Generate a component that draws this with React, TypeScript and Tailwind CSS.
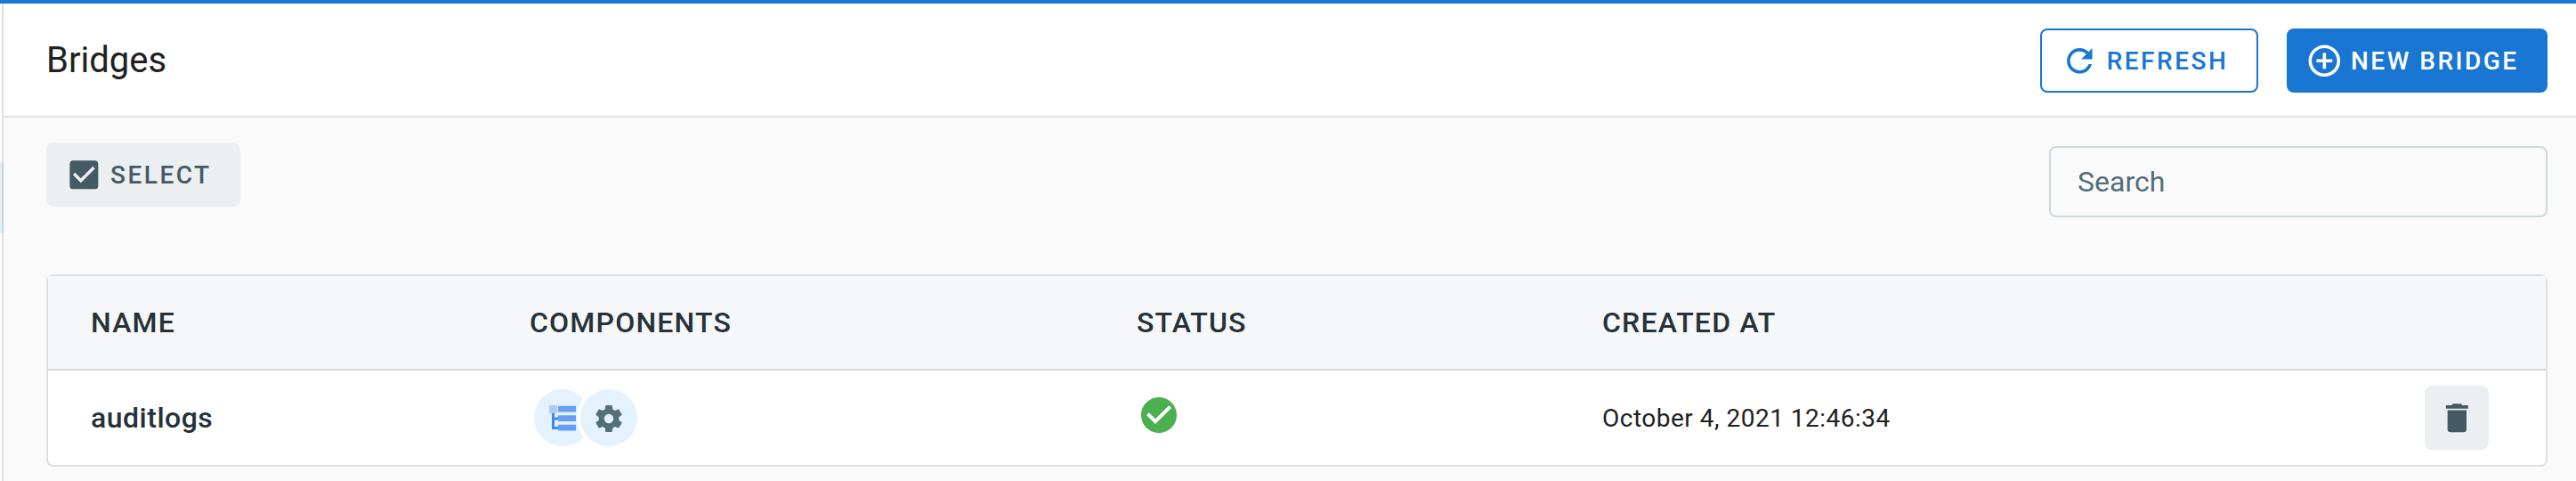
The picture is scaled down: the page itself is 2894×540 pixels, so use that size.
import React from "react";

function Mdi({ d, className }: { d: string; className: string }) {
  return (
    <svg viewBox="0 0 24 24" className={className} fill="currentColor" aria-hidden="true">
      <path d={d} />
    </svg>
  );
}

const icons = {
  refresh:
    "M17.65,6.35C16.2,4.9 14.21,4 12,4A8,8 0 0,0 4,12A8,8 0 0,0 12,20C15.73,20 18.84,17.45 19.73,14H17.65C16.83,16.33 14.61,18 12,18A6,6 0 0,1 6,12A6,6 0 0,1 12,6C13.66,6 15.14,6.69 16.22,7.78L13,11H20V4L17.65,6.35Z",
  plusCircle:
    "M12,20C7.59,20 4,16.41 4,12C4,7.59 7.59,4 12,4C16.41,4 20,7.59 20,12C20,16.41 16.41,20 12,20M12,2A10,10 0 0,0 2,12A10,10 0 0,0 12,22A10,10 0 0,0 22,12A10,10 0 0,0 12,2M13,7H11V11H7V13H11V17H13V13H17V11H13V7Z",
  checkbox:
    "M10,17L5,12L6.41,10.58L10,14.17L17.59,6.58L19,8M19,3H5C3.89,3 3,3.89 3,5V19A2,2 0 0,0 5,21H19A2,2 0 0,0 21,19V5C21,3.89 20.1,3 19,3Z",
  checkCircle:
    "M12 2C6.5 2 2 6.5 2 12S6.5 22 12 22 22 17.5 22 12 17.5 2 12 2M10 17L5 12L6.41 10.59L10 14.17L17.59 6.58L19 8L10 17Z",
  trash:
    "M19,4H15.5L14.5,3H9.5L8.5,4H5V6H19M6,19A2,2 0 0,0 8,21H16A2,2 0 0,0 18,19V7H6V19Z",
  cog: "M12,15.5A3.5,3.5 0 0,1 8.5,12A3.5,3.5 0 0,1 12,8.5A3.5,3.5 0 0,1 15.5,12A3.5,3.5 0 0,1 12,15.5M19.43,12.97C19.47,12.65 19.5,12.33 19.5,12C19.5,11.67 19.47,11.34 19.43,11L21.54,9.37C21.73,9.22 21.78,8.95 21.66,8.73L19.66,5.27C19.54,5.05 19.27,4.96 19.05,5.05L16.56,6.05C16.04,5.66 15.5,5.32 14.87,5.07L14.5,2.42C14.46,2.18 14.25,2 14,2H10C9.75,2 9.54,2.18 9.5,2.42L9.13,5.07C8.5,5.32 7.96,5.66 7.44,6.05L4.95,5.05C4.73,4.96 4.46,5.05 4.34,5.27L2.34,8.73C2.21,8.95 2.27,9.22 2.46,9.37L4.57,11C4.53,11.34 4.5,11.67 4.5,12C4.5,12.33 4.53,12.65 4.57,12.97L2.46,14.63C2.27,14.78 2.21,15.05 2.34,15.27L4.34,18.73C4.46,18.95 4.73,19.03 4.95,18.95L7.44,17.94C7.96,18.34 8.5,18.68 9.13,18.93L9.5,21.58C9.54,21.82 9.75,22 10,22H14C14.25,22 14.46,21.82 14.5,21.58L14.87,18.93C15.5,18.67 16.04,18.34 16.56,17.94L19.05,18.95C19.27,19.03 19.54,18.95 19.66,18.73L21.66,15.27C21.78,15.05 21.73,14.78 21.54,14.63L19.43,12.97Z",
};

function LogTree() {
  return (
    <svg viewBox="0 -1 30 30" className="size-[30px]" aria-hidden="true">
      <path d="M3 9h3v4.6h5v2.8H6V24h5v3H3z" fill="#4285f4" />
      <path d="M0 0h9v9H0z" fill="#aecbfa" />
      <path d="M10 .8h20v6.8H10zM10 11.3h20v6.8H10zM10 21.8h20v6.8H10z" fill="#669df6" />
    </svg>
  );
}

function Sidebar() {
  return (
    <div className="flex w-1 shrink-0 flex-col bg-white">
      <div className="h-[178px] border-r-2 border-[#e0e0e0]" />
      <div className="h-20 border-r-2 border-[#c8d6e2] bg-[#e3f0fb]" />
      <div className="flex-1 border-r-2 border-[#e0e0e0]" />
    </div>
  );
}

function Header() {
  return (
    <header className="flex h-32 items-start justify-between border-b-2 border-[#e0e0e0] bg-white pl-12 pr-8">
      <h1 className="mt-8 text-[40px] leading-[64px] text-[#212121]">Bridges</h1>
      <div className="mt-7 flex gap-8">
        <button className="flex h-[72px] w-[245px] items-center rounded-lg border-2 border-[#1976d2] pl-[21px] text-[28px] font-medium tracking-[2.5px] text-[#1976d2]">
          <Mdi d={icons.refresh} className="mr-[9px] size-[42.67px]" />
          <span className="mt-[2px]">REFRESH</span>
        </button>
        <button className="flex h-[72px] w-[293px] items-center rounded-lg bg-[#1976d2] pl-[21px] text-[28px] font-medium tracking-[2.5px] text-white">
          <Mdi d={icons.plusCircle} className="mr-[8.33px] size-[42.67px]" />
          <span className="mt-[2px]">NEW BRIDGE</span>
        </button>
      </div>
    </header>
  );
}

const columns = "grid grid-cols-[493px_682px_523px_1fr_auto] items-center pl-12";

export default function App() {
  return (
    <div className="flex h-[540px] flex-col overflow-hidden border-t-4 border-[#1976d2] bg-[#fafafa] font-['Roboto',sans-serif]">
      <div className="flex flex-1">
        <Sidebar />
        <main className="flex flex-1 flex-col">
          <Header />
          <section className="flex flex-col pl-12 pr-8">
            <div className="flex h-44 items-start justify-between">
              <button className="mt-7 flex h-[72px] w-[218px] items-center rounded-lg bg-[#eceff1] pl-[21px] text-[28px] font-medium tracking-[2.5px] text-[#455a64]">
                <Mdi d={icons.checkbox} className="mr-[8.33px] size-[42.67px]" />
                <span className="mt-[2px]">SELECT</span>
              </button>
              <input
                type="text"
                placeholder="Search"
                className="mt-8 h-20 w-[560px] rounded-lg border-2 border-[#cfd8dc] bg-transparent px-[30px] text-[32px] text-[#546e7a] placeholder:text-[#546e7a]"
              />
            </div>
            <div className="flex h-[216px] flex-col rounded-lg border-2 border-[#e0e0e0] bg-white">
              <div className={columns + " h-[106px] border-b-2 border-[#d8dadc] bg-[#f5f7f9] text-[32px] font-medium tracking-[1.2px] text-[#263238]"}>
                <div>NAME</div>
                <div>COMPONENTS</div>
                <div>STATUS</div>
                <div>CREATED AT</div>
              </div>
              <div className={columns + " h-[106px]"}>
                <div className="text-[32px] font-medium tracking-[0.5px] text-[#263238]">auditlogs</div>
                <div className="flex pl-[1px]">
                  <div className="flex size-[72px] items-center justify-center rounded-full border-4 border-white bg-[#e3f2fd] bg-clip-padding">
                    <LogTree />
                  </div>
                  <div className="-ml-5 flex size-[72px] items-center justify-center rounded-full border-4 border-white bg-[#e3f2fd] bg-clip-padding text-[#546e7a]">
                    <Mdi d={icons.cog} className="mt-[2px] size-9" />
                  </div>
                </div>
                <div>
                  <Mdi d={icons.checkCircle} className="-mt-1.5 ml-[0.5px] size-12 text-[#4caf50]" />
                </div>
                <div className="mt-[2px] text-[28px] tracking-[0.5px] text-[#212121]">October 4, 2021 12:46:34</div>
                <button className="mr-16 flex size-[72px] items-center justify-center rounded-lg bg-[#eceff1] text-[#455a64]">
                  <Mdi d={icons.trash} className="size-[42.67px]" />
                </button>
              </div>
            </div>
          </section>
        </main>
      </div>
    </div>
  );
}
